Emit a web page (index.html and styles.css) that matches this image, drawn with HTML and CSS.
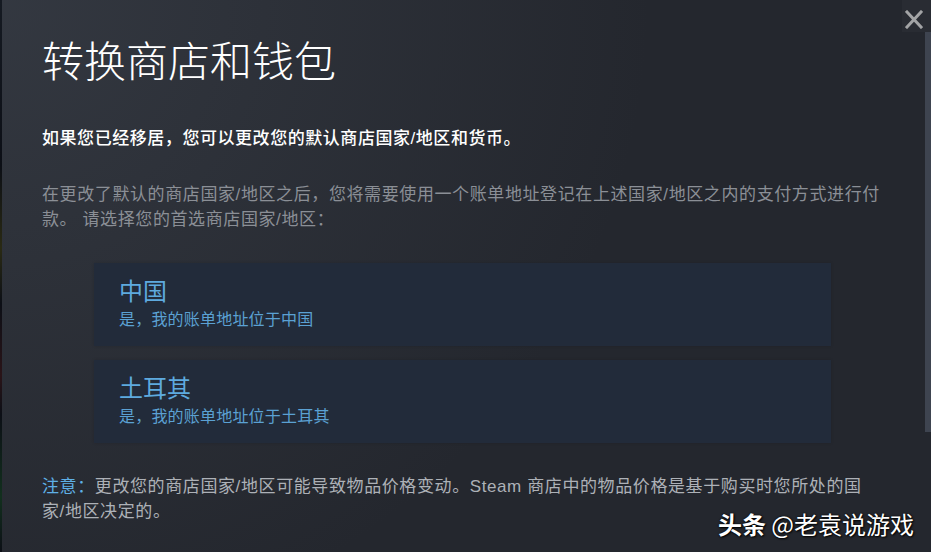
FILE: index.html
```html
<!DOCTYPE html>
<html lang="zh-CN">
<head>
<meta charset="utf-8">
<title>转换商店和钱包</title>
<link rel="stylesheet" href="styles.css">
</head>
<body>
<div class="page">
  <div class="backdrop"></div>
  <div class="dialog">
    <div class="content">
      <h1 class="title">转换商店和钱包</h1>
      <p class="lead">如果您已经移居，您可以更改您的默认商店国家/地区和货币。</p>
      <p class="desc">在更改了默认的商店国家/地区之后，您将需要使用一个账单地址登记在上述国家/地区之内的支付方式进行付款。 请选择您的首选商店国家/地区：</p>
      <div class="options">
        <div class="option">
          <div class="option-name">中国</div>
          <div class="option-sub">是，我的账单地址位于中国</div>
        </div>
        <div class="option">
          <div class="option-name">土耳其</div>
          <div class="option-sub">是，我的账单地址位于土耳其</div>
        </div>
      </div>
      <p class="note"><span class="note-label">注意：</span>更改您的商店国家/地区可能导致物品价格变动。Steam 商店中的物品价格是基于购买时您所处的国家/地区决定的。</p>
    </div>
    <div class="scrolltrack"><div class="thumb"></div></div>
    <button class="close" aria-label="关闭">
      <svg width="18" height="19" viewBox="0 0 18 19"><path d="M2 2 L16 17 M16 2 L2 17" stroke="#a3a4a6" stroke-width="3" stroke-linecap="square" fill="none"/></svg>
    </button>
  </div>
  <div class="watermark"><b>头条</b> @老袁说游戏</div>
</div>
</body>
</html>
```

FILE: styles.css
```css
* { box-sizing: border-box; }
html, body {
  margin: 0;
  padding: 0;
  width: 931px;
  height: 552px;
  overflow: hidden;
  background: #0e1219;
  font-family: "Liberation Sans", "Noto Sans CJK SC", sans-serif;
}
.page {
  position: relative;
  display: flex;
  width: 931px;
  height: 552px;
}
.backdrop {
  width: 2px;
  flex: none;
  background: linear-gradient(180deg, #151a22 0%, #0c0f16 30%, #2a2a14 45%, #0c0f16 55%, #2a1418 68%, #0c0f16 75%, #12301e 90%, #0c0f16 100%);
}
.dialog {
  position: relative;
  flex: 1;
  display: flex;
  background: radial-gradient(circle at top left, rgba(74,81,92,0.4) 0%, rgba(75,81,92,0) 60%), #24272e;
}
.content {
  flex: 1;
  padding: 34px 42px 0 40px;
}
.title {
  margin: 0;
  font-size: 42px;
  line-height: 50px;
  font-weight: 300;
  color: #ffffff;
  font-family: "Noto Sans CJK SC", sans-serif;
}
.lead {
  margin: 42px 0 0;
  font-size: 17px;
  line-height: 25px;
  font-weight: 500;
  letter-spacing: 0.55px;
  color: #ffffff;
}
.desc {
  margin: 31px 0 0;
  font-size: 17px;
  line-height: 25px;
  letter-spacing: 0.6px;
  color: #8b8f96;
}
.options {
  display: flex;
  flex-direction: column;
  gap: 14px;
  margin: 31px 52px 0;
}
.option {
  background: #222b3a;
  padding: 15px 25px 16px;
  box-shadow: 0 0 3px rgba(0,0,0,0.15);
}
.option-name {
  font-size: 24px;
  line-height: 28px;
  color: #5eaadf;
}
.option-sub {
  margin-top: 4px;
  font-size: 16px;
  line-height: 20px;
  letter-spacing: 0.2px;
  color: #5ba1d3;
}
.note {
  margin: 31px 0 0;
  font-size: 17px;
  line-height: 25px;
  letter-spacing: 0.6px;
  color: #adb1b7;
}
.note-label {
  color: #5fb0e6;
}
.scrolltrack {
  width: 6px;
  flex: none;
  padding-top: 17px;
}
.thumb {
  height: 415px;
  background: #3e4450;
}
.close {
  position: absolute;
  top: 0;
  right: 0;
  width: 29px;
  height: 32px;
  padding: 10px 0 0 3px;
  border: 0;
  background: #292c33;
  display: flex;
  align-items: flex-start;
  cursor: pointer;
}
.watermark {
  position: absolute;
  right: 17px;
  bottom: 12px;
  font-family: "Noto Sans CJK SC", sans-serif;
  font-size: 24px;
  line-height: 32px;
  color: #ffffff;
  text-shadow: 1px 1px 2px #000, 0 0 2px #000;
}
.watermark b { font-weight: 700; }
```
